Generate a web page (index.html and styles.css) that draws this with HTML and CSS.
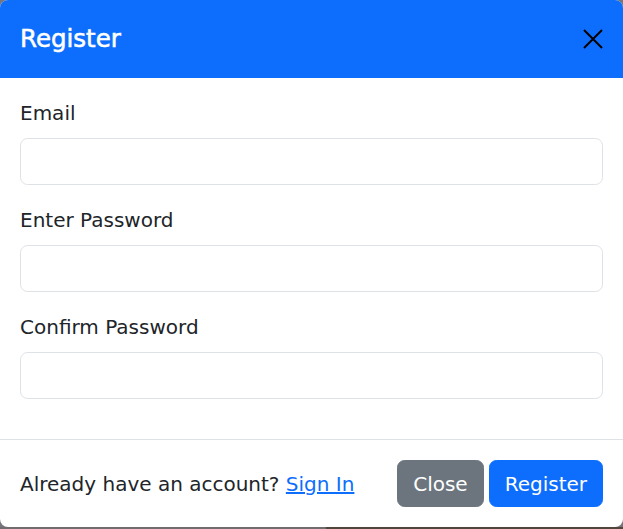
FILE: index.html
```html
<!DOCTYPE html>
<html lang="en">
<head>
<meta charset="utf-8">
<title>Register</title>
<link rel="stylesheet" href="styles.css">
</head>
<body>
<div class="modal">
  <div class="modal-header">
    <h5 class="modal-title">Register</h5>
    <button class="btn-close" type="button" aria-label="Close">
      <svg width="20" height="20" viewBox="0 0 20 20"><path d="M1 1L19 19M19 1L1 19" stroke="#000" stroke-width="2" fill="none"/></svg>
    </button>
  </div>
  <div class="modal-body">
    <div class="group">
      <label class="label" for="email">Email</label>
      <input class="control" id="email" type="email">
    </div>
    <div class="group">
      <label class="label" for="pw">Enter Password</label>
      <input class="control" id="pw" type="password">
    </div>
    <div class="group">
      <label class="label" for="pw2">Confirm Password</label>
      <input class="control" id="pw2" type="password">
    </div>
  </div>
  <div class="modal-footer">
    <p class="note">Already have an account? <a href="#" class="link">Sign In</a></p>
    <div class="actions">
      <button class="btn btn-secondary" type="button">Close</button>
      <button class="btn btn-primary" type="button">Register</button>
    </div>
  </div>
</div>
<div class="backdrop-strip"><span class="strip-a"></span><span class="strip-b"></span></div>
</body>
</html>
```
FILE: styles.css
```css
* { box-sizing: border-box; }
html, body { margin: 0; padding: 0; }
body {
  background: #76767c;
  font-family: "DejaVu Sans", sans-serif;
  font-size: 20px;
  color: #212529;
  width: 623px;
  height: 529px;
  overflow: hidden;
}
.modal {
  background: #fff;
  border-radius: 8px;
  overflow: hidden;
  display: flex;
  flex-direction: column;
}
.modal-header {
  background: #0d6efd;
  padding: 20px;
  height: 78px;
  display: flex;
  align-items: center;
  justify-content: space-between;
}
.modal-title {
  margin: 0;
  color: #fff;
  font-size: 24.5px;
  font-weight: normal;
  -webkit-text-stroke: 0.55px #fff;
  line-height: 38px;
}
.btn-close {
  background: none;
  border: 0;
  padding: 0;
  width: 20px;
  height: 20px;
  display: flex;
  cursor: pointer;
}
.modal-body { padding: 20px; }
.group { margin-bottom: 20px; }
.label {
  display: block;
  line-height: 30px;
  margin-bottom: 10px;
}
.control {
  display: block;
  width: 100%;
  height: 47px;
  border: 1px solid #dee2e6;
  border-radius: 7.5px;
  background: #fff;
  font: inherit;
  padding: 7.5px 15px;
}
.modal-footer {
  border-top: 1px solid #dee2e6;
  padding: 15px;
  display: flex;
  align-items: center;
  justify-content: space-between;
}
.note { margin: 5px; line-height: 30px; }
.link { color: #0d6efd; text-decoration: underline; }
.actions { display: flex; gap: 5px; margin: 5px; }
.btn {
  font: inherit;
  line-height: 30px;
  padding: 7.5px 15px;
  border-radius: 7.5px;
  border: 1px solid transparent;
  color: #fff;
}
.btn-secondary { background: #6c757d; border-color: #6c757d; }
.btn-primary { background: #0d6efd; border-color: #0d6efd; }
.backdrop-strip { display: flex; height: 2px; }
.strip-a { width: 326px; background: #6f6b6f; }
.strip-b { flex: 1; background: #51463c; }
```
